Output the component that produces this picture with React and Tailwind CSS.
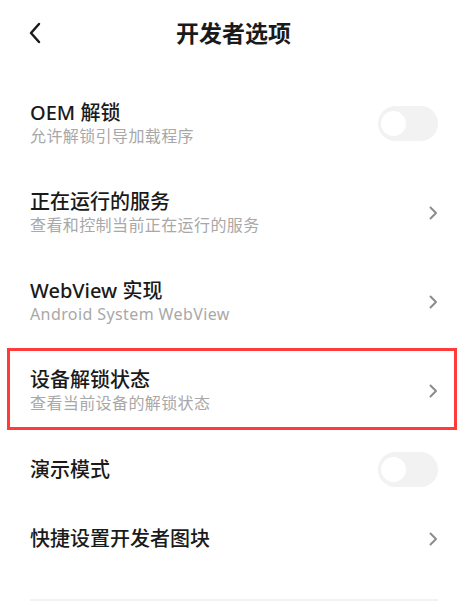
import React from "react";

const font = { fontFamily: '"Noto Sans", "Noto Sans CJK SC", sans-serif' };

function Chevron() {
  return (
    <svg width="10" height="14" viewBox="0 0 10 14" className="shrink-0">
      <path d="M2.5 1.5 L8 7 L2.5 12.5" fill="none" stroke="#8c8c8c" strokeWidth="2" strokeLinecap="round" strokeLinejoin="round" />
    </svg>
  );
}

function Toggle() {
  return (
    <div className="w-[60px] h-[35px] rounded-full bg-[#f2f2f2] flex items-center pl-[3px] shrink-0">
      <div className="w-[25px] h-[25px] rounded-full bg-white" />
    </div>
  );
}

function Row({ title, sub, right, tall }) {
  return (
    <div className={`flex items-center justify-between pl-[30px] pr-[29px] ${tall ? "h-[89px]" : "h-[69px]"}`}>
      <div className="flex flex-col">
        <div className="text-[20px] leading-[26px] font-medium text-[#1a1a1a]">{title}</div>
        {sub && <div className="text-[16px] leading-[22px] tracking-[0.4px] text-[#a8a8a8] -mt-[1px]">{sub}</div>}
      </div>
      {right === "toggle" ? <Toggle /> : <Chevron />}
    </div>
  );
}

export default function App() {
  return (
    <div className="w-[467px] h-[607px] bg-white overflow-hidden" style={font}>
      <div className="h-[79px] relative flex items-start justify-center pt-[18px]">
        <svg width="14" height="22" viewBox="0 0 14 22" className="absolute left-[28px] top-[22px]">
          <path d="M11 2 L3 11 L11 20" fill="none" stroke="#1a1a1a" strokeWidth="2.5" strokeLinecap="round" strokeLinejoin="round" />
        </svg>
        <div className="text-[23px] leading-[30px] font-bold text-[#1a1a1a]">开发者选项</div>
      </div>
      <Row tall title="OEM 解锁" sub="允许解锁引导加载程序" right="toggle" />
      <Row tall title="正在运行的服务" sub="查看和控制当前正在运行的服务" />
      <Row tall title="WebView 实现" sub="Android System WebView" />
      <div className="relative">
        <Row tall title="设备解锁状态" sub="查看当前设备的解锁状态" />
        <div className="absolute left-[7px] right-[10px] top-[2px] bottom-[5px] border-[3px] border-[#ff3b3b] pointer-events-none" />
      </div>
      <Row title="演示模式" right="toggle" />
      <Row title="快捷设置开发者图块" />
      <div className="mx-[30px] mt-[26px] mr-[29px] h-[2px] bg-[#f2f2f2]" />
    </div>
  );
}
